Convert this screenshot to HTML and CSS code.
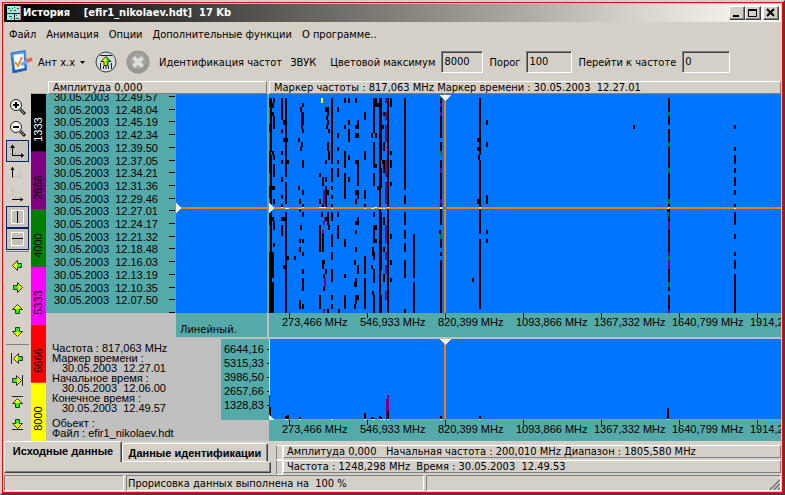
FILE: index.html
```html
<!DOCTYPE html>
<html lang="ru">
<head>
    <meta charset="UTF-8">
    <meta name="viewport" content="width=device-width, initial-scale=1.0">
    <title>История [efir1_nikolaev.hdt] 17 Kb</title>
    <link rel="stylesheet" href="styles.css">
</head>
<body>
    <!-- Shared arrow shape for the side toolbar -->
    <svg class="defs" width="0" height="0">
        <defs>
            <linearGradient id="lime" x1="0" y1="0" x2="1" y2="0">
                <stop offset="0.4" stop-color="#ff0"/>
                <stop offset="0.6" stop-color="#2e2"/>
            </linearGradient>
            <linearGradient id="pad" x1="0" y1="0" x2="0" y2="1">
                <stop offset="0" stop-color="#5aa0f0"/>
                <stop offset="1" stop-color="#1450b0"/>
            </linearGradient>
            <path id="arrow" d="M0.5 5.5L5.5 0.5V3.5H9.5V7.5H5.5V10.5Z" fill="url(#lime)" stroke="#333"/>
        </defs>
    </svg>

    <div class="window">
        <div class="frame">
            <div class="titlebar">
                <svg class="app-icon" width="14" height="14" viewBox="0 0 14 14" shape-rendering="crispEdges">
                    <rect width="14" height="14" fill="#a8e8d8"/>
                    <path d="M0 7.5h14M7.5 7v7" stroke="#123" fill="none"/>
                    <path d="M1 2.5h2M3 4.5h2M5 2.5h1M7 1.5h1M7 4.5h2M10 2.5h2M2 10.5h3M9 9.5h1M9 12.5h3M4 12.5h1" stroke="#264" fill="none"/>
                    <path d="M13.5 0v14" stroke="#d6a" fill="none"/>
                </svg>
                <h1>История &nbsp;&nbsp; [efir1_nikolaev.hdt]&nbsp; 17 Kb</h1>
                <button class="sys" aria-label="Свернуть"><svg width="12" height="10"><path d="M2 8h6" stroke="#000" stroke-width="2"/></svg></button>
                <button class="sys" aria-label="Развернуть"><svg width="12" height="10"><path d="M1.5 1.5h8v7h-8z" stroke="#000" fill="none"/><path d="M1 2h9" stroke="#000" stroke-width="2"/></svg></button>
                <button class="sys close" aria-label="Закрыть"><svg width="12" height="10"><path d="M2 1l7 7M9 1l-7 7" stroke="#000" stroke-width="2"/></svg></button>
            </div>

            <nav class="menu">
                <a href="#">Файл</a>
                <a href="#">Анимация</a>
                <a href="#">Опции</a>
                <a href="#">Дополнительные функции</a>
                <a href="#">О программе..</a>
            </nav>

            <div class="toolbar">
                <button class="tool antenna">
                    <svg width="24" height="24" viewBox="0 0 24 24">
                        <path d="M1 3L15 0.5L16.5 20L3 23Z" fill="url(#pad)" stroke="#3070c8"/>
                        <path d="M3.5 5L13.5 3.5L14.5 18L5 20Z" fill="#f4faff"/>
                        <path d="M5 12l3 4l4-9" fill="none" stroke="#f09020" stroke-width="2"/>
                        <path d="M11 15l7-5" stroke="#68a8f0" stroke-width="3"/>
                        <path d="M17 11l5-2" stroke="#f06040" stroke-width="4"/>
                    </svg>
                    Ант x.x
                    <svg class="drop" width="5" height="3"><path d="M0 0h5L2.5 3z"/></svg>
                </button>
                <button class="tool" aria-label="Загрузить">
                    <svg width="22" height="22" viewBox="0 0 22 22">
                        <circle cx="11" cy="11" r="10" fill="#d8dcd8" stroke="#244860"/>
                        <path d="M5 4.5h12M5.5 12v6M16.5 12v6M8.5 15v3M11 15v3M13.5 15v3" stroke="#222" fill="none"/>
                        <path d="M11 5.5L16 10.5H13V14.5H9V10.5H6Z" fill="url(#lime)" stroke="#222"/>
                    </svg>
                </button>
                <button class="tool" aria-label="Стоп">
                    <svg width="24" height="24" viewBox="0 0 24 24">
                        <circle cx="12" cy="12" r="11.5" fill="#989894"/>
                        <circle cx="12" cy="11" r="8" fill="#a4a4a0"/>
                        <path d="M7.5 7.5l9 9M16.5 7.5l-9 9" stroke="#dedcd6" stroke-width="4"/>
                    </svg>
                </button>
                <button class="tool text">Идентификация частот</button>
                <button class="tool text">ЗВУК</button>
                <label for="colorMax">Цветовой максимум</label>
                <input id="colorMax" class="field" type="text" value="8000">
                <label for="threshold">Порог</label>
                <input id="threshold" class="field mid" type="text" value="100">
                <label for="gotoFreq">Перейти к частоте</label>
                <input id="gotoFreq" class="field wide" type="text" value="0">
            </div>

            <div class="headers">
                <div class="header-cell amp">Амплитуда 0,000</div>
                <div class="header-cell">Маркер частоты : 817,063 MHz Маркер времени : 30.05.2003&nbsp; 12.27.01</div>
            </div>

            <div class="main">
                <!-- Side toolbar -->
                <div class="side">
                    <button aria-label="Увеличить"><svg width="18" height="18" viewBox="0 0 18 18"><path d="M11 11l5 5" stroke="#222" stroke-width="3"/><path d="M11 11l4 4" stroke="#aaa"/><circle cx="7" cy="7" r="5.5" fill="#f4f4f0" stroke="#222"/><path d="M4 7h6M7 4v6" stroke="#000" stroke-width="2"/></svg></button>
                    <button aria-label="Уменьшить"><svg width="18" height="18" viewBox="0 0 18 18"><path d="M11 11l5 5" stroke="#222" stroke-width="3"/><path d="M11 11l4 4" stroke="#aaa"/><circle cx="7" cy="7" r="5.5" fill="#f4f4f0" stroke="#222"/><path d="M4 7h6" stroke="#000" stroke-width="2"/></svg></button>
                    <button class="pressed" aria-label="Обе оси"><svg width="15" height="14" viewBox="0 0 15 14"><path d="M2.5 1v10.5H14" stroke="#000" fill="none"/><path d="M0 4L2.5 0.5L5 4zM11 9l3 2.5l-3 2.5z"/><path d="M5 9.5h6" stroke="#888" stroke-dasharray="1 2"/></svg></button>
                    <button aria-label="Вертикальная ось"><svg width="15" height="14" viewBox="0 0 15 14"><path d="M2.5 1v10.5" stroke="#000" fill="none"/><path d="M0.5 4L2.5 1L4.5 4z"/><path d="M4 10.5h6M10.5 5v4" stroke="#999" stroke-dasharray="1 2"/><path d="M10 10l3 1.5l-3 1.5z" fill="#bbb"/></svg></button>
                    <button aria-label="Горизонтальная ось"><svg width="15" height="14" viewBox="0 0 15 14"><path d="M2 11.5H13" stroke="#000" fill="none"/><path d="M10.5 9.5l3 2l-3 2z"/><path d="M2.5 3v6M5 9.5h6" stroke="#999" stroke-dasharray="1 2"/><path d="M1 4L2.5 1L4 4z" fill="#bbb"/></svg></button>
                    <button class="pressed" aria-label="Маркер частоты"><svg width="13" height="14" viewBox="0 0 13 14" shape-rendering="crispEdges"><path d="M0.5 0.5h12v13h-12z" fill="#c4c0b8" stroke="#fff"/><path d="M6.5 1v12" stroke="#000"/></svg></button>
                    <button class="pressed" aria-label="Маркер времени"><svg width="13" height="14" viewBox="0 0 13 14" shape-rendering="crispEdges"><path d="M0.5 0.5h12v13h-12z" fill="#c4c0b8" stroke="#fff"/><path d="M1 6.5h11" stroke="#000"/></svg></button>
                    <hr>
                    <button aria-label="Влево"><svg width="11" height="12"><use href="#arrow"/></svg></button>
                    <button aria-label="Вправо"><svg width="11" height="12"><use href="#arrow" transform="rotate(180 5.5 5.5)"/></svg></button>
                    <button aria-label="Вверх"><svg width="11" height="12"><use href="#arrow" transform="rotate(90 5.5 5.5)"/></svg></button>
                    <button aria-label="Вниз"><svg width="11" height="12"><use href="#arrow" transform="rotate(270 5.5 5.5)"/></svg></button>
                    <hr>
                    <button aria-label="В начало по частоте"><svg width="13" height="12"><path d="M0.5 0v11" stroke="#222"/><use href="#arrow" x="2"/></svg></button>
                    <button aria-label="В конец по частоте"><svg width="13" height="12"><use href="#arrow" transform="rotate(180 5.5 5.5)"/><path d="M11.5 0v11" stroke="#222"/></svg></button>
                    <button aria-label="В начало по времени"><svg width="11" height="14"><path d="M0 0.5h11" stroke="#222"/><use href="#arrow" transform="translate(0 2) rotate(90 5.5 5.5)"/></svg></button>
                    <button aria-label="В конец по времени"><svg width="11" height="14"><use href="#arrow" transform="rotate(270 5.5 5.5)"/><path d="M0 11.5h11" stroke="#222"/></svg></button>
                </div>

                <!-- Colour scale -->
                <ul class="scale">
                    <li class="black">1333</li>
                    <li class="purple">2666</li>
                    <li class="green">4000</li>
                    <li class="magenta">5333</li>
                    <li class="red">6666</li>
                    <li class="yellow">8000</li>
                </ul>

                <div class="charts">
                    <ul class="time-axis">
                        <li>30.05.2003&nbsp; 12.49.57</li>
                        <li>30.05.2003&nbsp; 12.48.04</li>
                        <li>30.05.2003&nbsp; 12.45.19</li>
                        <li>30.05.2003&nbsp; 12.42.34</li>
                        <li>30.05.2003&nbsp; 12.39.50</li>
                        <li>30.05.2003&nbsp; 12.37.05</li>
                        <li>30.05.2003&nbsp; 12.34.21</li>
                        <li>30.05.2003&nbsp; 12.31.36</li>
                        <li>30.05.2003&nbsp; 12.29.46</li>
                        <li>30.05.2003&nbsp; 12.27.01</li>
                        <li>30.05.2003&nbsp; 12.24.17</li>
                        <li>30.05.2003&nbsp; 12.21.32</li>
                        <li>30.05.2003&nbsp; 12.18.48</li>
                        <li>30.05.2003&nbsp; 12.16.03</li>
                        <li>30.05.2003&nbsp; 12.13.19</li>
                        <li>30.05.2003&nbsp; 12.10.35</li>
                        <li>30.05.2003&nbsp; 12.07.50</li>
                        <li></li>
                    </ul>

                    <svg class="strip" width="100%" height="100%" shape-rendering="crispEdges">
                        <path d="M0 114h91" class="marker"/>
                        <path d="M0 109l5 5l-5 5z" fill="#f4f4f4"/>
                    </svg>

                    <div class="divider"></div>

                    <!-- Waterfall -->
                    <svg class="waterfall" width="100%" height="100%" shape-rendering="crispEdges">
                        <g class="cells">
                            <path d="M2 4v54M2 61v158M1 4v9M1 30v8M1 57v22M1 92v12M1 118v13M1 158v61M4 9v5M4 18v4M4 57v4M4 92v4M4 123v4M4 158v26M4 188v31"/>
                            <path d="M5 4v5M5 22v13M5 61v5M5 70v13M5 92v4M5 105v5M5 127v9M5 149v4"/>
                            <path d="M13 4v22M13 35v4M13 57v4M13 66v4M13 83v5M13 101v4M13 110v4M13 123v4M13 131v11"/>
                            <path d="M17 4v79M17 88v22M17 118v101M15 26v5M15 44v4M18 44v4M19 66v4M15 123v4M19 162v4M15 171v4"/>
                            <path d="M26 162v4M30 44v4M30 92v4M31 105v5M31 114v4M32 13v5M31 145v4M31 153v5M31 206v9M32 53v4M33 18v4M32 131v5"/>
                            <path d="M34 9v4M34 18v13M33 22v13M34 35v4M33 48v5M34 66v8M34 96v5M34 110v4M34 118v5M34 145v4M34 158v4M34 175v5M34 184v13M34 210v5"/>
                            <path d="M51 79v4M51 105v5M51 131v27M51 201v14M53 118v5M54 83v9M54 136v22M54 166v9M57 83v5M54 110v4M57 110v4M55 166v4M57 175v5M55 180v4M55 193v4"/>
                            <path d="M57 13v5M59 13v9M58 22v4M59 26v5M58 31v4M60 35v4M59 48v9M60 57v9M57 66v4M57 92v18M59 96v5M59 118v13M59 127v4M60 131v5M57 123v4M59 215v4"/>
                            <path d="M63 4v66M63 74v14M63 92v4M63 101v4M63 110v4M63 118v9M63 140v13M63 158v8M63 175v13M63 201v5M63 210v5"/>
                            <path d="M69 13v5M69 39v5M69 53v4M69 66v4M69 74v9M69 118v5M69 131v14M70 215v4"/>
                            <path d="M76 4v5M76 31v4M76 57v17M76 79v26M76 145v8M76 180v4M76 201v14M80 4v5M80 26v5M80 35v13M80 61v5M80 83v5"/>
                            <path d="M87 4v5M89 26v5M87 31v4M89 31v4M87 39v5M89 39v5M87 66v4M89 66v26M87 96v5M89 96v9M87 105v5M89 123v8M87 127v4M87 136v4M87 153v5M86 166v5M89 171v9M87 184v9M86 188v5M87 201v9M89 201v5M86 210v5"/>
                            <path d="M96 18v8M96 57v9M96 96v9M96 110v4M96 162v18M96 184v31"/>
                            <path d="M105 4v35M107 4v5M107 9v4M103 39v5M107 39v5M105 48v26M105 79v13M107 70v4M105 118v5M105 131v18M107 131v5M104 153v9M105 158v8M103 171v4M105 175v14M104 197v4M107 145v4M105 201v18"/>
                            <path d="M111 4v215M112 4v62M112 74v20M112 118v58M112 201v18M109 9v4M114 31v4M115 18v4M115 48v9M115 74v5M114 66v4M109 92v4"/>
                            <path d="M119 4v215M115 66v8M115 123v8M115 153v5M115 180v8M122 4v9M122 57v4M122 66v8M122 88v4M122 140v5M122 166v5M122 184v4"/>
                            <path d="M136 4v92M136 101v9M136 118v13M136 136v9M136 149v9M136 166v18M136 215v4M145 140v44M145 188v31"/>
                            <path d="M172 4v40M172 48v9M172 66v65M171 136v4M172 140v14M172 158v4M172 166v53"/>
                            <path d="M211 4v57M211 66v74M211 145v70M209 44v4M209 53v4M210 61v5M209 105v5M218 26v5M218 48v5M218 101v9M218 136v4M218 145v4M204 184v4M365 31v4"/>
                            <path d="M400 4v27M400 35v162M400 201v18M399 114v9"/>
                            <path d="M466 31v4M466 53v4M466 61v9M466 74v5M466 83v9M466 96v5M466 110v4M466 118v13M466 140v5M466 158v4M466 166v9M466 180v39"/>
                        </g>
                        <path class="lvl-purple" d="M55 96v14M55 123v8M54 136v4M56 184v9M55 215v4M117 4v5M117 18v8M117 31v8M117 39v9M117 66v17M117 88v22M117 131v18M117 158v8M117 171v9M117 197v9M172 9v4M172 18v4M172 74v5M172 105v5M400 127v9M400 158v4M400 166v9M400 215v4"/>
                        <path class="lvl-green" d="M172 57v4M172 140v5M400 18v4M400 48v5M400 74v5M400 105v5M399 118v5M400 162v4M400 188v5"/>
                        <path class="lvl-magenta" d="M54 123v4M117 54v3"/>
                        <path class="lvl-yellow" d="M53 4v5"/>
                        <line class="marker" x1="0" y1="114" x2="100%" y2="114"/>
                        <line class="marker" x1="176" y1="0" x2="176" y2="100%"/>
                        <path class="hits" d="M12 113.5h2M16 114.5h4M30 114.5h2M33 113.5h2M50 113.5h7M62 114.5h2M95 114.5h2M102 114.5h3M105 113.5h3M110 114.5h3M114 114.5h2M118 113.5h2M398 114.5h2M399 113.5h2M465 114.5h2"/>
                        <path d="M171 113h2v2h-2zM210 113h2v2h-2z" fill="#f4f4f4"/>
                        <path d="M0 109l6 5l-6 5zM170 1h13l-6.5 6z" fill="#f4f4f4"/>
                        <path d="M175 114h2" stroke="#0075ff" stroke-width="2"/>
                    </svg>

                    <div class="mode">Линейный.</div>
                    <ul class="freq-axis top">
                        <li>273,466 MHz</li>
                        <li>546,933 MHz</li>
                        <li>820,399 MHz</li>
                        <li>1093,866 MHz</li>
                        <li>1367,332 MHz</li>
                        <li>1640,799 MHz</li>
                        <li>1914,266 MHz</li>
                    </ul>

                    <div class="info">
                        <p>Частота : 817,063 MHz</p>
                        <p>Маркер времени :</p>
                        <p class="value">30.05.2003&nbsp; 12.27.01</p>
                        <p>Начальное время :</p>
                        <p class="value">30.05.2003&nbsp; 12.06.00</p>
                        <p>Конечное время :</p>
                        <p class="value">30.05.2003&nbsp; 12.49.57</p>
                        <p class="object">Обьект :</p>
                        <p>Файл : efir1_nikolaev.hdt</p>
                    </div>

                    <ul class="amp-axis">
                        <li>6644,16</li>
                        <li>5315,33</li>
                        <li>3986,50</li>
                        <li>2657,66</li>
                        <li>1328,83</li>
                    </ul>

                    <!-- Spectrum at the time marker -->
                    <svg class="spectrum" width="100%" height="100%" shape-rendering="crispEdges">
                        <line x1="0" y1="80.5" x2="100%" y2="80.5" stroke="#e08820"/>
                        <path d="M0.5 0v81" stroke="#ff0"/>
                        <path d="M0 56h1v12h-1zM117 60h1v-4h2v24h-3z" fill="#800080"/>
                        <path d="M0 68h2v12h-2zM16 77h2v-1h2v4h-4zM30 78h2v2h-2zM95 74h2v6h-2zM102 78h2v1h2v1h-4zM110 77h2v1h1v2h-3zM118 72h2v8h-2zM171 77h2v3h-2zM210 77h2v3h-2zM398 69h2v11h-2z"/>
                        <path d="M16 80.5h3M30 80.5h2M62 80.5h2M95 80.5h2M103 80.5h3M110 80.5h3M114 80.5h2M118 80.5h2M171 80.5h2M210 80.5h2M398 80.5h2" stroke="#f4f4f4"/>
                        <line class="marker" x1="176" y1="5" x2="176" y2="80"/>
                        <path d="M170 0h12l-6 6zM0 76l5 5h-5z" fill="#f4f4f4"/>
                    </svg>

                    <ul class="freq-axis bottom">
                        <li>273,466 MHz</li>
                        <li>546,933 MHz</li>
                        <li>820,399 MHz</li>
                        <li>1093,866 MHz</li>
                        <li>1367,332 MHz</li>
                        <li>1640,799 MHz</li>
                        <li>1914,266 MHz</li>
                    </ul>
                </div>
            </div>

            <div class="footer">
                <div class="tabs">
                    <div class="tab-row">
                        <button class="tab active">Исходные данные</button>
                        <button class="tab">Данные идентификации</button>
                    </div>
                    <div class="tab-page"></div>
                </div>
                <div class="readouts">
                    <div class="readout">Амплитуда 0,000 &nbsp; Начальная частота : 200,010 MHz Диапазон : 1805,580 MHz</div>
                    <div class="readout">Частота : 1248,298 MHz&nbsp; Время : 30.05.2003&nbsp; 12.49.53</div>
                </div>
            </div>

            <div class="status">
                <div class="status-cell first"></div>
                <div class="status-cell second">Прорисовка данных выполнена на&nbsp; 100 %</div>
                <div class="status-cell last">
                    <svg width="12" height="12"><path d="M0 12L12 0M4 12L12 4M8 12L12 8" stroke="#fff"/><path d="M1.5 12L12 1.5M5.5 12L12 5.5M9.5 12L12 9.5" stroke="#808080" stroke-width="2"/></svg>
                </div>
            </div>
        </div>
    </div>
</body>
</html>
```
FILE: styles.css
```css
* { margin: 0; padding: 0; box-sizing: border-box; }

body {
    font-family: "DejaVu Sans Condensed", Tahoma, sans-serif;
    font-size: 11px;
    color: #000;
    background: #d4d0c8;
}

ul { list-style: none; }

svg { display: block; }

.defs { position: absolute; }

button {
    font: inherit;
    color: inherit;
    background: none;
    border: none;
}

.window {
    display: flex;
    min-height: 100vh;
    border: 2px solid;
    border-color: #d4d0c8 #404040 #404040 #d4d0c8;
}

.frame {
    flex: 1;
    min-width: 0;
    display: flex;
    flex-direction: column;
    border: 1px solid #f00;
    padding: 1px;
    background: #d4d0c8;
}

/* Title bar */
.titlebar {
    display: flex;
    align-items: center;
    height: 18px;
    padding: 0 2px 0 3px;
    background: linear-gradient(90deg, #000, #aca8a0 66%, #d4d0c8 80%, #fffff6);
}

.titlebar h1 {
    flex: 1;
    margin-left: 2px;
    font-size: 11px;
    line-height: 18px;
    color: #fff;
    white-space: nowrap;
}

.sys {
    width: 16px;
    height: 14px;
    padding: 1px;
    background: #d4d0c8;
    border: 1px solid;
    border-color: #fff #404040 #404040 #fff;
    box-shadow: inset -1px -1px #808080;
}

.close { margin-left: 2px; }

/* Menu */
.menu {
    display: flex;
    gap: 10px;
    height: 24px;
    padding-left: 5px;
    line-height: 25px;
    white-space: nowrap;
}

.menu a {
    color: #000;
    text-decoration: none;
}

/* Toolbar */
.toolbar {
    display: flex;
    align-items: center;
    height: 35px;
    padding: 0 0 3px 6px;
    white-space: nowrap;
}

.tool {
    display: flex;
    align-items: center;
    margin-right: 9px;
}

.antenna { gap: 4px; }

.antenna .drop { margin: 0 1px; }

.tool.text { margin-right: 8px; }

.toolbar label { margin: 0 6px; }

.field {
    width: 42px;
    height: 22px;
    padding: 0 0 2px 2px;
    font: inherit;
    background: #d4d0c8;
    border: 1px solid;
    border-color: #808080 #fff #fff #808080;
    box-shadow: inset 1px 1px #404040;
    outline: none;
}

.field.mid { width: 46px; }

.field.wide { width: 48px; }

/* Marker read-outs over the plots */
.headers {
    display: flex;
    gap: 2px;
    height: 13px;
    padding-left: 44px;
}

.header-cell {
    flex: 1;
    padding-left: 4px;
    line-height: 12px;
    white-space: nowrap;
    border: 1px solid;
    border-color: #fff #808080 #808080 #fff;
}

.header-cell.amp { flex: 0 0 219px; }

.main {
    flex: 1;
    display: flex;
    min-height: 347px;
}

.side {
    display: flex;
    flex-direction: column;
    width: 27px;
    padding: 2px 2px 0;
}

.side button {
    display: flex;
    align-items: center;
    justify-content: center;
    height: 22px;
}

.side .pressed {
    background: #c8c4bc;
    border: 1px solid #0a246a;
}

.side hr {
    border: none;
    border-top: 1px solid #808080;
    margin: 1px 0 3px;
}

/* Colour scale */
.scale {
    display: flex;
    flex-direction: column;
    width: 15px;
    font-family: "Liberation Sans", Arial, sans-serif;
}

.scale li {
    flex: 1;
    padding-top: 10px;
    line-height: 15px;
    writing-mode: vertical-rl;
    transform: rotate(180deg);
}

.black { background: #000; color: #fff; }
.purple { background: #800080; }
.green { background: #008000; }
.magenta { background: #f0f; }
.red { background: #f00; }
.yellow { background: #ff0; }

/* Plots */
.charts {
    flex: 1;
    min-width: 0;
    display: grid;
    grid-template-columns: 130px 45px 46px 2px 1fr;
    grid-template-rows: 1fr 24px 2px 81px 21px;
    font-family: "Liberation Sans", Arial, sans-serif;
    background: #c0c0c0;
}

.time-axis {
    display: flex;
    flex-direction: column;
    justify-content: space-between;
    padding: 2px 1px 0 8px;
    overflow: hidden;
    background: #54a9a9;
}

.time-axis li {
    display: flex;
    justify-content: space-between;
    height: 1px;
    line-height: 3px;
    white-space: nowrap;
}

.time-axis li::after {
    content: "";
    width: 6px;
    margin-left: auto;
    background: #000;
}

.strip,
.waterfall,
.spectrum { background: #0075ff; }

.strip { grid-column: 2 / 4; }

.divider { background: #54a9a9; }

.waterfall { grid-area: 1 / 5; }

.cells path {
    stroke: #000;
    stroke-width: 2;
}

.marker {
    stroke: #f08000;
    stroke-width: 2;
}

.lvl-purple { stroke: #800080; stroke-width: 2; }
.lvl-green { stroke: #008000; stroke-width: 2; }
.lvl-magenta { stroke: #f0f; stroke-width: 1; }
.lvl-yellow { stroke: #ff0; stroke-width: 2; }
.hits { stroke: #f4f4f4; }

.mode {
    grid-area: 2 / 2 / 3 / 4;
    padding: 8px 0 0 4px;
    font-family: "DejaVu Sans Condensed", Tahoma, sans-serif;
    line-height: 18px;
    background: #54a9a9;
}

.freq-axis {
    display: flex;
    padding-left: 13px;
    overflow: hidden;
    line-height: 18px;
    background: #54a9a9;
}

.freq-axis.top { grid-area: 2 / 5; }

.freq-axis.bottom { grid-area: 5 / 5; }

.freq-axis li {
    position: relative;
    flex: 0 0 78px;
    white-space: nowrap;
}

.freq-axis li::before {
    content: "";
    position: absolute;
    left: 7px;
    width: 1px;
    height: 5px;
    background: #000;
}

.info {
    grid-area: 4 / 1 / 6 / 3;
    padding: 4px 0 0 6px;
    line-height: 10px;
    white-space: nowrap;
}

.info .value { padding-left: 10px; }

.info .object { margin-top: 5px; }

.amp-axis {
    grid-area: 4 / 3 / 5 / 5;
    padding: 3px 0 0 3px;
    line-height: 14px;
    background: #54a9a9;
}

.amp-axis li {
    display: flex;
    align-items: center;
    justify-content: space-between;
}

.amp-axis li::after {
    content: "";
    width: 2px;
    height: 1px;
    background: #000;
}

.spectrum { grid-area: 4 / 5; }

/* Footer */
.footer {
    display: flex;
    gap: 5px;
    height: 34px;
}

.tabs {
    flex: 0 0 267px;
    display: flex;
    flex-direction: column;
}

.tab-row {
    display: flex;
    align-items: flex-end;
    padding-right: 3px;
    height: 21px;
}

.tab {
    flex: 1;
    height: 19px;
    font-family: "Liberation Sans", Arial, sans-serif;
    font-size: 11px;
    font-weight: bold;
    white-space: nowrap;
    background: #d4d0c8;
    border: 1px solid;
    border-color: #fff #404040 #fff #fff;
    border-radius: 2px 2px 0 0;
    box-shadow: inset -1px 0 #808080;
}

.tab.active {
    flex: 0 0 118px;
    height: 21px;
    padding-bottom: 3px;
    border-bottom: none;
}

.tab-page {
    height: 11px;
    border: 1px solid;
    border-color: transparent #404040 #404040 #fff;
    box-shadow: inset -1px -1px #808080;
}

.readouts {
    flex: 1;
    min-width: 0;
    display: flex;
    flex-direction: column;
    gap: 2px;
    padding-top: 4px;
}

.readout {
    height: 13px;
    margin-left: 7px;
    padding-left: 3px;
    line-height: 12px;
    white-space: nowrap;
    border: 1px solid;
    border-color: #fff #808080 #808080 #fff;
    position: relative;
}

.readout::before {
    content: "";
    position: absolute;
    left: -8px;
    top: -1px;
    width: 5px;
    height: 13px;
    border: 1px solid;
    border-color: #fff #fff #fff #808080;
}

.status {
    display: flex;
    gap: 2px;
    height: 16px;
}

.status-cell {
    line-height: 15px;
    padding-left: 1px;
    white-space: nowrap;
    border: 1px solid;
    border-color: #808080 #fff #fff #808080;
}

.status-cell.first { flex: 0 0 120px; }

.status-cell.second { flex: 0 0 298px; }

.status-cell.last {
    flex: 1;
    display: flex;
    align-items: flex-end;
    justify-content: flex-end;
}
```
